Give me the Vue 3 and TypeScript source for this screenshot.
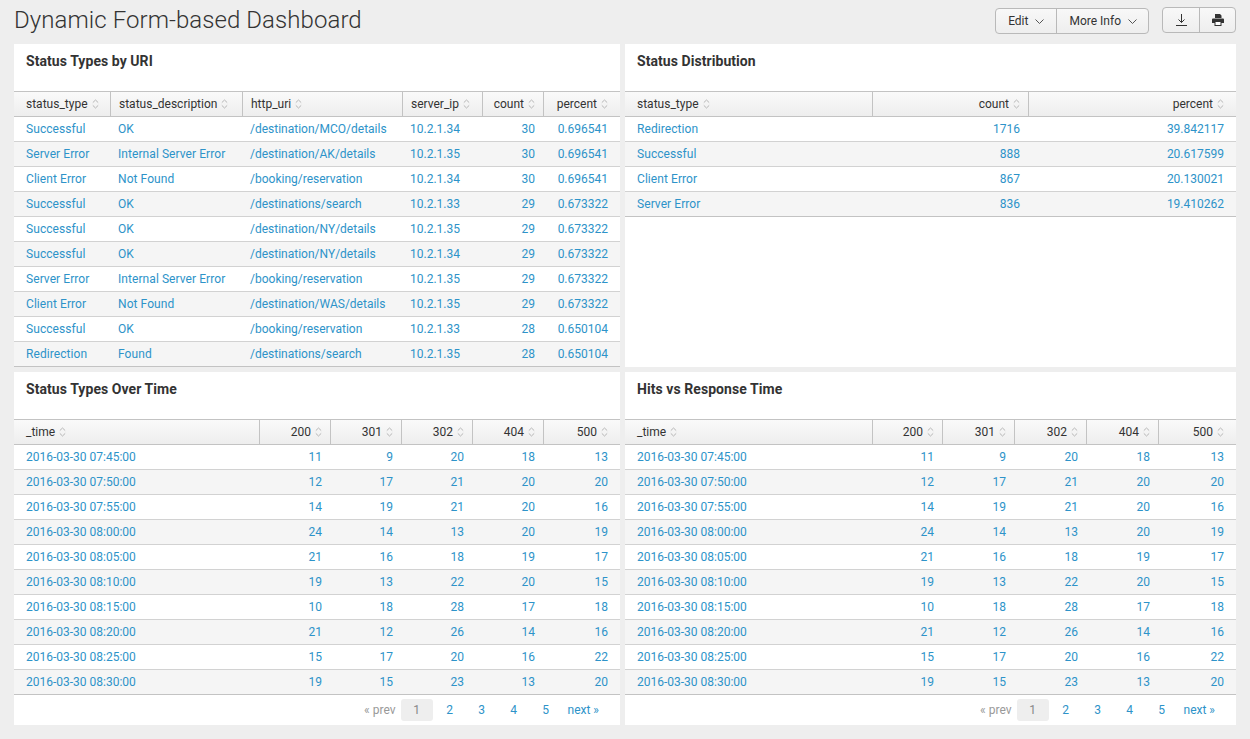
<script setup lang="ts">
interface Panel {
  title: string
  widths: number[]
  head: string[]
  numeric: boolean[]
  rows: (string | number)[][]
}

const timeRows: (string | number)[][] = [
  ['2016-03-30 07:45:00', 11, 9, 20, 18, 13],
  ['2016-03-30 07:50:00', 12, 17, 21, 20, 20],
  ['2016-03-30 07:55:00', 14, 19, 21, 20, 16],
  ['2016-03-30 08:00:00', 24, 14, 13, 20, 19],
  ['2016-03-30 08:05:00', 21, 16, 18, 19, 17],
  ['2016-03-30 08:10:00', 19, 13, 22, 20, 15],
  ['2016-03-30 08:15:00', 10, 18, 28, 17, 18],
  ['2016-03-30 08:20:00', 21, 12, 26, 14, 16],
  ['2016-03-30 08:25:00', 15, 17, 20, 16, 22],
  ['2016-03-30 08:30:00', 19, 15, 23, 13, 20],
]

const topPanels: Panel[] = [
  {
    title: 'Status Types by URI',
    widths: [96, 132, 160, 80, 61, 77],
    head: ['status_type', 'status_description', 'http_uri', 'server_ip', 'count', 'percent'],
    numeric: [false, false, false, false, true, true],
    rows: [
      ['Successful', 'OK', '/destination/MCO/details', '10.2.1.34', 30, '0.696541'],
      ['Server Error', 'Internal Server Error', '/destination/AK/details', '10.2.1.35', 30, '0.696541'],
      ['Client Error', 'Not Found', '/booking/reservation', '10.2.1.34', 30, '0.696541'],
      ['Successful', 'OK', '/destinations/search', '10.2.1.33', 29, '0.673322'],
      ['Successful', 'OK', '/destination/NY/details', '10.2.1.35', 29, '0.673322'],
      ['Successful', 'OK', '/destination/NY/details', '10.2.1.34', 29, '0.673322'],
      ['Server Error', 'Internal Server Error', '/booking/reservation', '10.2.1.35', 29, '0.673322'],
      ['Client Error', 'Not Found', '/destination/WAS/details', '10.2.1.35', 29, '0.673322'],
      ['Successful', 'OK', '/booking/reservation', '10.2.1.33', 28, '0.650104'],
      ['Redirection', 'Found', '/destinations/search', '10.2.1.35', 28, '0.650104'],
    ],
  },
  {
    title: 'Status Distribution',
    widths: [247, 156, 208],
    head: ['status_type', 'count', 'percent'],
    numeric: [false, true, true],
    rows: [
      ['Redirection', 1716, '39.842117'],
      ['Successful', 888, '20.617599'],
      ['Client Error', 867, '20.130021'],
      ['Server Error', 836, '19.410262'],
    ],
  },
]

const timeHead = ['_time', '200', '301', '302', '404', '500']
const timeNumeric = [false, true, true, true, true, true]

const bottomPanels: Panel[] = [
  {
    title: 'Status Types Over Time',
    widths: [245, 71, 71, 71, 71, 77],
    head: timeHead,
    numeric: timeNumeric,
    rows: timeRows,
  },
  {
    title: 'Hits vs Response Time',
    widths: [247, 70, 72, 72, 72, 78],
    head: timeHead,
    numeric: timeNumeric,
    rows: timeRows,
  },
]

const pages = ['2', '3', '4', '5']

// words render a touch wider than digits and paths in the reference
function isWord(c: string | number) {
  return /^[a-z]{2}/i.test(String(c))
}
</script>

<template>
  <div class="page">
    <header class="top">
      <h1>Dynamic Form-based Dashboard</h1>
      <div class="actions">
        <div class="btn-group">
          <button class="btn">Edit
            <svg class="chev" width="9" height="5" viewBox="0 0 9 5"><path d="M.5.5l4 4 4-4" fill="none" stroke="#555" /></svg>
          </button>
          <button class="btn">More Info
            <svg class="chev" width="9" height="5" viewBox="0 0 9 5"><path d="M.5.5l4 4 4-4" fill="none" stroke="#555" /></svg>
          </button>
        </div>
        <div class="btn-group tools">
          <button class="btn icon">
            <svg width="11" height="12" viewBox="0 0 11 12"><path d="M5.500 0v8.500M2.500 5.500l3 3 3-3" fill="none" stroke="#333" /><path d="M0 11h11v1H0z" fill="#333" /></svg>
          </button>
          <button class="btn icon">
            <svg width="12" height="12" viewBox="0 0 12 12"><path d="M3 0h5l1.500 1.500V4H3zM1 4.500h10a1 1 0 0 1 1 1V9H9.500v3h-7V9H0V5.500a1 1 0 0 1 1-1z" fill="#333" /><path d="M3.500 8h5v3h-5z" fill="#fff" /></svg>
          </button>
        </div>
      </div>
    </header>

    <div class="row row-top">
      <section v-for="p in topPanels" :key="p.title" class="panel">
        <h2>{{ p.title }}</h2>
        <table>
          <colgroup><col v-for="(w, i) in p.widths" :key="i" :style="{ width: w + 'px' }" /></colgroup>
          <thead>
            <tr>
              <th v-for="(h, i) in p.head" :key="h" :class="{ num: p.numeric[i] }">{{ h }}<svg class="sort" width="7" height="10" viewBox="0 0 7 10"><path d="M.8 3.600L3.500 1l2.700 2.600M.8 6.400L3.500 9l2.700-2.600" fill="none" stroke="#b5b5b5" /></svg></th>
            </tr>
          </thead>
          <tbody>
            <tr v-for="(r, ri) in p.rows" :key="ri">
              <td v-for="(c, ci) in r" :key="ci" :class="{ num: p.numeric[ci], word: isWord(c) }">{{ c }}</td>
            </tr>
          </tbody>
        </table>
      </section>
    </div>

    <div class="row row-bottom">
      <section v-for="p in bottomPanels" :key="p.title" class="panel">
        <h2>{{ p.title }}</h2>
        <table>
          <colgroup><col v-for="(w, i) in p.widths" :key="i" :style="{ width: w + 'px' }" /></colgroup>
          <thead>
            <tr>
              <th v-for="(h, i) in p.head" :key="h" :class="{ num: p.numeric[i] }">{{ h }}<svg class="sort" width="7" height="10" viewBox="0 0 7 10"><path d="M.8 3.600L3.500 1l2.700 2.600M.8 6.400L3.500 9l2.700-2.600" fill="none" stroke="#b5b5b5" /></svg></th>
            </tr>
          </thead>
          <tbody>
            <tr v-for="(r, ri) in p.rows" :key="ri">
              <td v-for="(c, ci) in r" :key="ci" :class="{ num: p.numeric[ci] }">{{ c }}</td>
            </tr>
          </tbody>
        </table>
        <nav class="pager">
          <span class="muted">« prev</span>
          <span class="current">1</span>
          <a v-for="n in pages" :key="n">{{ n }}</a>
          <span class="next">next »</span>
        </nav>
      </section>
    </div>
  </div>
</template>

<style>
html, body {
  margin: 0;
  background: #eeeeee;
}
</style>

<style scoped>
.page {
  width: 1250px;
  height: 739px;
  box-sizing: border-box;
  padding: 0 14px;
  overflow: hidden;
  font-family: Roboto, "Liberation Sans", sans-serif;
  font-size: 12px;
  color: #333;
}

.top {
  height: 44px;
  display: flex;
  justify-content: space-between;
  align-items: flex-start;
}

h1 {
  margin: 5px 0 0;
  font-size: 24px;
  line-height: 30px;
  font-weight: 300;
  letter-spacing: 0.07px;
  color: #333;
}

.actions {
  display: flex;
  gap: 13px;
  padding-top: 8px;
}

.btn-group {
  display: flex;
  height: 26px;
  box-sizing: border-box;
  border: 1px solid #b9b9b9;
  border-radius: 4px;
  background: linear-gradient(#f8f8f8, #eeeeee);
}

.btn-group.tools {
  margin-top: -1px;
}

.btn {
  border: 0;
  background: transparent;
  padding: 0 12px;
  font: inherit;
  color: #333;
  display: flex;
  align-items: center;
  gap: 7px;
}

.btn + .btn {
  border-left: 1px solid #b9b9b9;
  padding-right: 11px;
}

.btn.icon {
  width: 36px;
  padding: 0;
  justify-content: center;
}

.row {
  display: flex;
  gap: 5px;
}

.row-top {
  height: 323px;
  margin-bottom: 5px;
}

.row-bottom {
  height: 353px;
}

.panel {
  background: #fff;
}

.panel:first-child {
  width: 606px;
}

.panel:last-child {
  width: 611px;
}

h2 {
  margin: 0;
  height: 47px;
  box-sizing: border-box;
  padding: 9px 12px 0;
  font-size: 14px;
  line-height: 17px;
  font-weight: 700;
  letter-spacing: 0.06px;
  color: #333;
}

table {
  width: 100%;
  table-layout: fixed;
  border-collapse: separate;
  border-spacing: 0;
}

th {
  height: 26px;
  box-sizing: border-box;
  padding: 0 8px;
  text-align: left;
  font-weight: 400;
  white-space: nowrap;
  background: linear-gradient(#fafafa, #eeeeee);
  border-top: 1px solid #c3c3c3;
  border-bottom: 1px solid #c3c3c3;
  border-left: 1px solid #c3c3c3;
}

th:first-child {
  border-left: 0;
  padding-left: 12px;
}

th:last-child, td:last-child {
  padding-right: 12px;
}

th.num, td.num {
  text-align: right;
}

.sort {
  margin-left: 4px;
  vertical-align: -1px;
}

td {
  height: 25px;
  box-sizing: border-box;
  padding: 0 8px;
  color: #2d93c9;
  white-space: nowrap;
  border-bottom: 1px solid #d2d2d2;
}

td.word {
  letter-spacing: 0.07px;
}

td:first-child {
  padding-left: 12px;
}

tbody tr:nth-child(even) td {
  background: #f5f5f5;
}

tbody tr:last-child td {
  border-bottom-color: #c3c3c3;
}

.pager {
  height: 30px;
  display: flex;
  justify-content: flex-end;
  align-items: center;
  padding-right: 21px;
  color: #2d93c9;
}

.pager .muted {
  color: #999;
  margin-right: 5px;
}

.pager .current {
  width: 32px;
  height: 22px;
  line-height: 22px;
  text-align: center;
  border-radius: 3px;
  background: #eeeeee;
  color: #888;
  margin-right: 1px;
}

.pager a {
  width: 32px;
  text-align: center;
}

.pager .next {
  margin-left: 6px;
}
</style>
